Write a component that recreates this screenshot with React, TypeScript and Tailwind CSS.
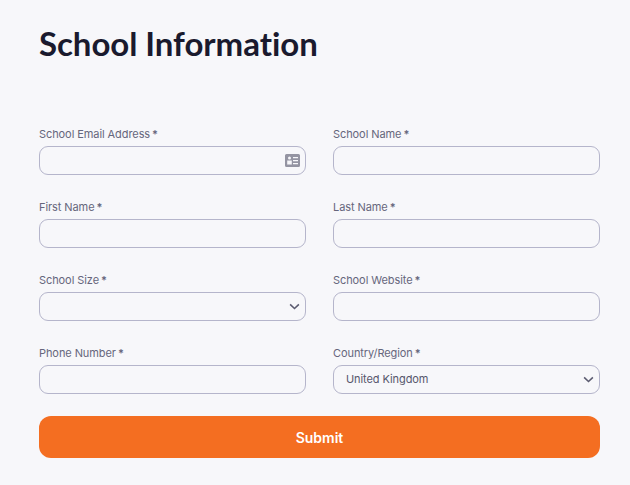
import React from 'react';

const fields = [
  { label: 'School Email Address', icon: 'card' },
  { label: 'School Name' },
  { label: 'First Name' },
  { label: 'Last Name' },
  { label: 'School Size', icon: 'chevron' },
  { label: 'School Website' },
  { label: 'Phone Number' },
  { label: 'Country/Region', icon: 'chevron', value: 'United Kingdom' },
];

function CardIcon() {
  return (
    <svg viewBox="0 0 15 13" className="w-[15px] h-[13px] shrink-0">
      <path
        fillRule="evenodd"
        fill="#9494a2"
        d="M1.500 0h12A1.500 1.500 0 0 1 15 1.500v10a1.500 1.500 0 0 1-1.500 1.500h-12A1.500 1.500 0 0 1 0 11.500v-10A1.500 1.500 0 0 1 1.500 0zM4.500 2.500a1.500 1.500 0 1 0 0 3 1.500 1.500 0 0 0 0-3zM2.200 6.500v4h4.600v-4zM8 3v1.300h5V3zM8 6v1.300h5V6zM8 9v1.300h5V9z"
      />
    </svg>
  );
}

function ChevronIcon() {
  return (
    <svg viewBox="0 0 12 8" className="w-[11px] h-[7px] shrink-0" fill="none">
      <path d="M1 1.500L6 6.300L11 1.500" stroke="#5b5b70" strokeWidth="1.800" />
    </svg>
  );
}

export default function App() {
  return (
    <div className="min-h-[485px] bg-[#f7f7fa] pl-[39px] pr-[30px] pt-[23px] font-['Inter',sans-serif]">
      <h1 className="font-['Lato',sans-serif] [font-variant-ligatures:none] text-[33px] leading-[40px] font-bold tracking-[-0.05px] text-[#1a1a2e]">School Information</h1>
      <div className="mt-[61px] grid grid-cols-2 gap-x-[27px] gap-y-[22px]">
        {fields.map((field) => (
          <div key={field.label}>
            <label className="flex items-center h-[20px] text-[11px] tracking-[-0.08px] text-[#66667c]">
              {field.label}
              <span className="ml-[2px] font-semibold">*</span>
            </label>
            <div className="mt-[2px] h-[29px] flex items-center justify-between pl-[12px] pr-[5px] rounded-[9px] border border-[#b5b5cb] bg-[#f7f7fa]">
              <span className="text-[11px] tracking-[-0.08px] text-[#56566c]">{field.value}</span>
              {field.icon === 'card' && <CardIcon />}
              {field.icon === 'chevron' && <ChevronIcon />}
            </div>
          </div>
        ))}
      </div>
      <button className="mt-[22px] w-full h-[42px] rounded-[12px] bg-[#f46e21] text-white text-[14px] font-semibold">
        Submit
      </button>
    </div>
  );
}
